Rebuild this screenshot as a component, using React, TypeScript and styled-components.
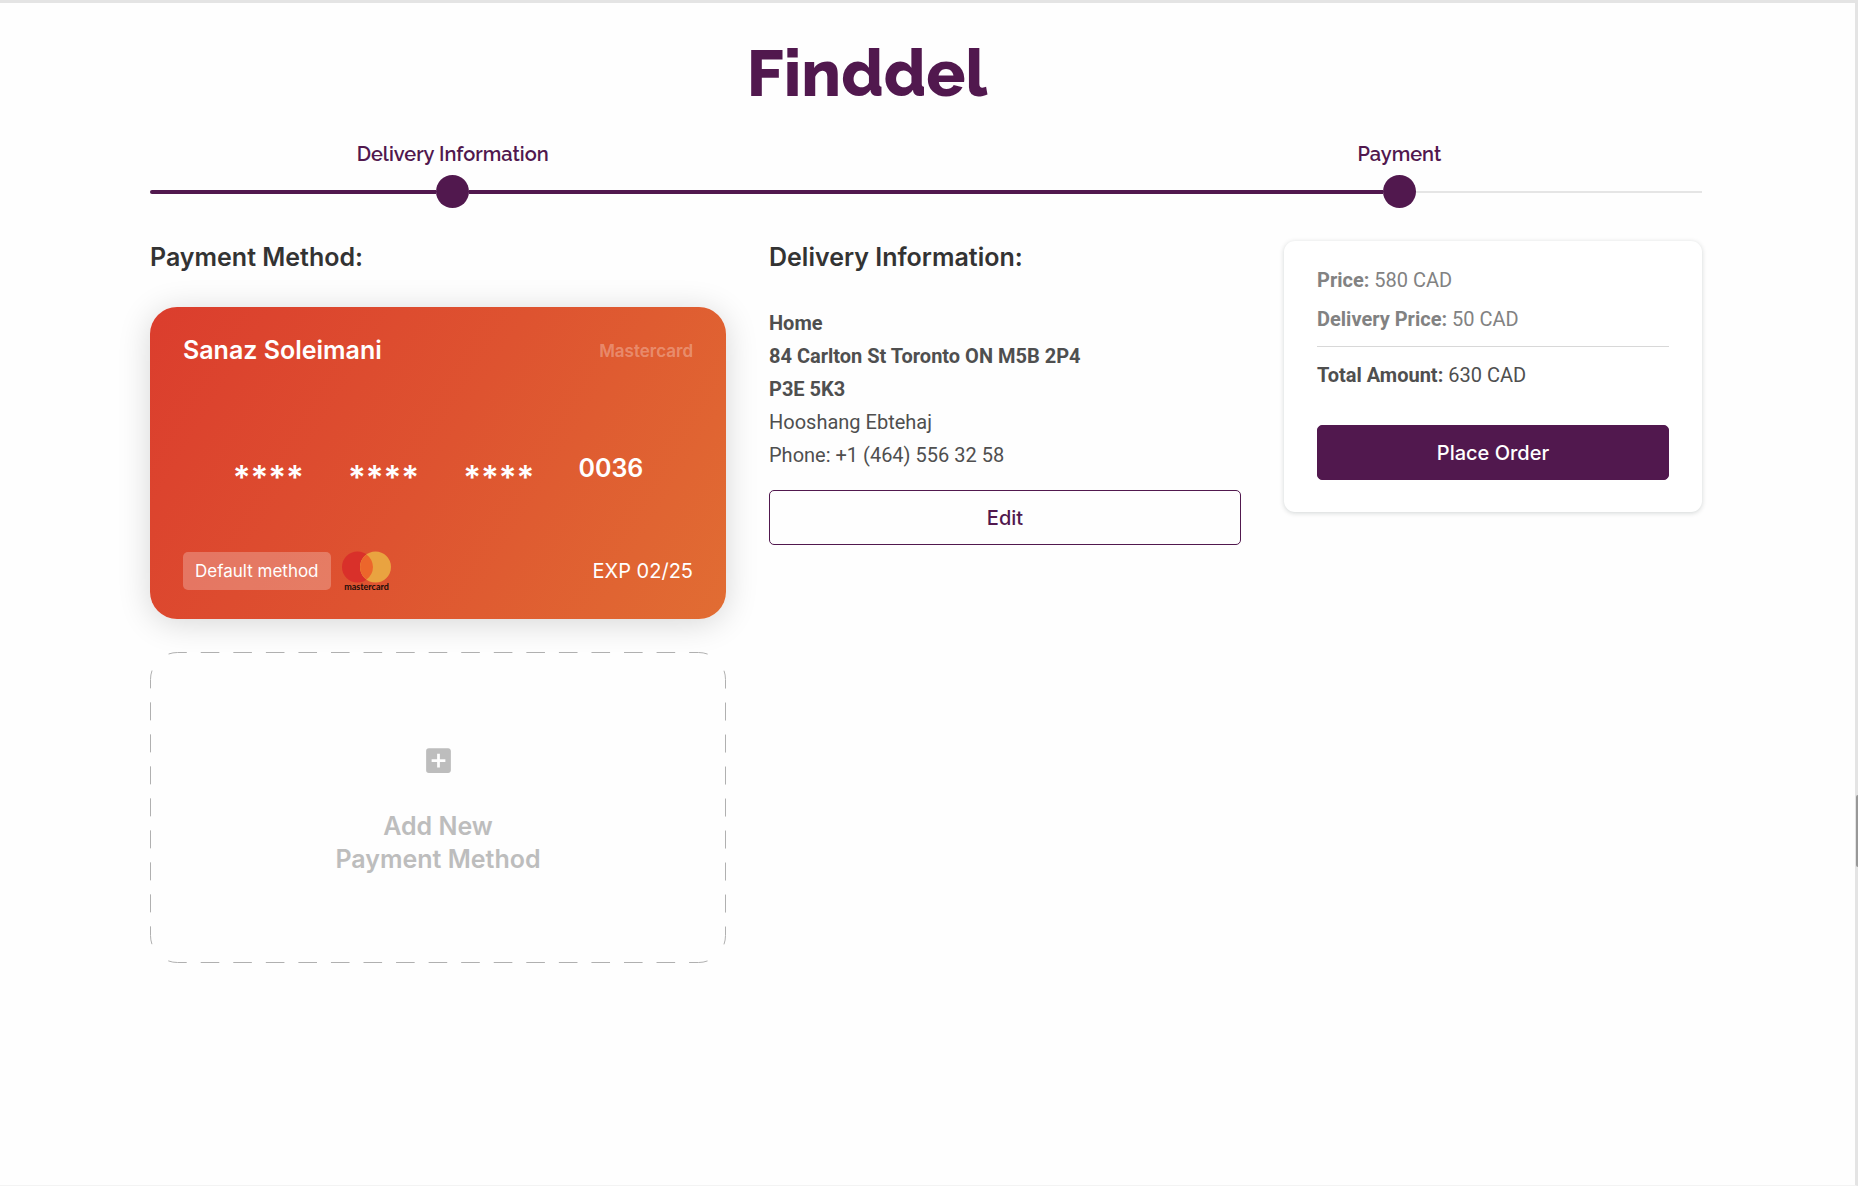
import React from "react";
import styled, { createGlobalStyle, css } from "styled-components";
import { MdAddBox } from "react-icons/md";

const plum = "#51184e";
const inter = 'Inter, "Liberation Sans", sans-serif';
const roboto = 'Roboto, "Liberation Sans", sans-serif';
const raleway = 'Raleway, Lato, "Liberation Sans", sans-serif';

const GlobalStyle = createGlobalStyle`
  *, *::before, *::after { box-sizing: border-box; }
  body { margin: 0; background: #fefefe; font-family: ${inter}; }
  h1, h2, p, ol, address { margin: 0; padding: 0; }
  button { font-family: inherit; cursor: pointer; }
`;

const Page = styled.div`
  position: relative;
  min-height: 100vh;
  padding: 42px 153px 0 150px;
  border-top: 3px solid #e4e4e4;
  border-right: 3px solid #e4e4e4;
  border-bottom: 1px solid #f3f3f3;
`;

const ScrollThumb = styled.span`
  position: absolute;
  top: 67%;
  right: -3px;
  width: 2px;
  height: 72px;
  border-radius: 2px 0 0 2px;
  background: #989898;
`;

const Header = styled.header`
  display: flex;
  justify-content: center;
  padding-right: 118px;
`;

const Logo = styled.h1`
  font-family: ${raleway};
  font-size: 65px;
  font-weight: 800;
  line-height: 56px;
  color: ${plum};
`;

const Steps = styled.ol`
  display: flex;
  align-items: flex-end;
  margin-top: 40px;
  list-style: none;
`;

const Step = styled.li`
  width: 39%;
`;

const StepLabel = styled.span`
  display: block;
  margin-bottom: 8px;
  font-family: ${raleway};
  font-size: 20px;
  font-weight: 600;
  line-height: 26px;
  text-align: center;
  color: ${plum};
`;

const Rail = styled.div`
  display: flex;
  align-items: center;
  height: 33px;
`;

const Connector = styled.li`
  display: flex;
  flex: 1;
  align-items: center;
  height: 33px;
`;

const Segment = styled.span<{ $done?: boolean; $start?: boolean }>`
  flex: 1;
  height: ${(p) => (p.$done ? 4 : 2)}px;
  border-radius: ${(p) => (p.$start ? "2px 0 0 2px" : "0")};
  background: ${(p) => (p.$done ? plum : "#e5e5e5")};
`;

const Dot = styled.span`
  width: 33px;
  height: 33px;
  border-radius: 50%;
  background: ${plum};
`;

const Columns = styled.main`
  display: grid;
  grid-template-columns: 576fr 472fr 418fr;
  gap: 43px;
  align-items: start;
  margin-top: 33px;
`;

const Heading = styled.h2`
  margin-bottom: 33px;
  font-size: 25px;
  font-weight: 600;
  line-height: 33px;
  color: #333;
`;

const CreditCard = styled.article`
  display: flex;
  flex-direction: column;
  justify-content: space-between;
  height: 312px;
  padding: 27px 33px 28px;
  border-radius: 27px;
  background: linear-gradient(121deg, #db3d2d 0%, #de5330 50%, #e16d33 100%);
  box-shadow: 0 4px 33px rgba(0, 0, 0, 0.16);
  color: #fff;
`;

const CardRow = styled.div`
  display: flex;
  align-items: center;
  justify-content: space-between;
`;

const Holder = styled.span`
  font-size: 25px;
  font-weight: 600;
  line-height: 33px;
`;

const Network = styled.span`
  font-size: 17px;
  font-weight: 600;
  line-height: 24px;
  color: rgba(255, 255, 255, 0.3);
`;

const CardNumber = styled.div`
  display: flex;
  align-items: center;
  justify-content: center;
  gap: 44px;
  padding-top: 18px;
  font-size: 25px;
  font-weight: 600;
  line-height: 33px;
`;

const Masked = styled.span`
  padding-top: 18px;
  font-size: 33px;
`;

const Badges = styled.div`
  display: flex;
  align-items: center;
  gap: 11px;
`;

const DefaultBadge = styled.span`
  padding: 0 12px;
  border-radius: 5px;
  background: rgba(255, 255, 255, 0.25);
  font-size: 17px;
  line-height: 38px;
`;

const Expiry = styled.span`
  font-size: 20px;
  line-height: 33px;
`;

const AddCard = styled.button`
  position: relative;
  display: flex;
  flex-direction: column;
  align-items: center;
  justify-content: center;
  gap: 33px;
  width: 100%;
  height: 311px;
  margin-top: 33px;
  padding: 4px 0 0;
  border: 0;
  border-radius: 27px;
  background: #fefefe;
  font-size: 25px;
  font-weight: 600;
  line-height: 33px;
  color: #bdbdbd;
`;

const DashedFrame = styled.svg`
  position: absolute;
  inset: 0;
  width: 100%;
  height: 100%;
`;

const Address = styled.address`
  margin-bottom: 18px;
  font-family: ${roboto};
  font-size: 20px;
  font-style: normal;
  line-height: 33px;
  color: #4f4f4f;
`;

const Strong = styled.strong`
  display: block;
  font-weight: 700;
`;

const Line = styled.span`
  display: block;
`;

const ActionButton = styled.button<{ $filled?: boolean }>`
  width: 100%;
  height: 55px;
  border: 1px solid ${plum};
  border-radius: 5px;
  font-size: 20px;
  font-weight: 500;
  ${(p) =>
    p.$filled
      ? css`
          background: ${plum};
          color: #fff;
        `
      : css`
          background: #fefefe;
          color: ${plum};
        `}
`;

const Summary = styled.aside`
  padding: 23px 33px 32px;
  border-radius: 11px;
  background: #fff;
  box-shadow: 0 1px 5px rgba(0, 30, 30, 0.18);
`;

const Amount = styled.p<{ $total?: boolean }>`
  font-family: ${roboto};
  font-size: 20px;
  line-height: 33px;
  color: ${(p) => (p.$total ? "#4f4f4f" : "#828282")};

  & + & {
    margin-top: 6px;
  }
`;

const Divider = styled.hr`
  height: 1px;
  margin: 10px 0 12px;
  border: 0;
  background: #d8d8d8;
`;

const PlaceOrder = styled.div`
  margin-top: 33px;
`;

/* Dashes sit centred on every point where a straight side meets its corner. */
function frameDashes() {
  const side = (count: number, dash: number, pitch: number) =>
    Array.from({ length: count - 1 }, () => [pitch - dash, dash]).flat();
  const corner = 24;
  const top = side(16, 18.6, 32.56);
  const edge = side(8, 18, 32);
  return [
    9.3, ...top, 14, 18.6,
    corner, 18, ...edge, 14, 18,
    corner, 18.6, ...top, 14, 18.6,
    corner, 18, ...edge, 14, 18,
    corner, 9.3,
  ].join(" ");
}

function MastercardMark() {
  return (
    <svg width="49" height="40" viewBox="0 0 49 40" role="img" aria-label="mastercard">
      <circle cx="15.5" cy="16" r="15.5" fill="#d9302a" />
      <circle cx="33.5" cy="16" r="15.5" fill="#e9a340" />
      <path d="M24.5 3.4a15.5 15.5 0 0 1 0 25.2a15.5 15.5 0 0 1 0-25.2z" fill="#ec662b" />
      <text x="24.5" y="39" textAnchor="middle" fontFamily="Lato, sans-serif" fontSize="9" fontWeight="700" fill="#1a0d0a">
        mastercard
      </text>
    </svg>
  );
}

export default function App() {
  return (
    <>
      <GlobalStyle />
      <Page>
        <ScrollThumb />
        <Header>
          <Logo>Finddel</Logo>
        </Header>

        <Steps>
          <Step>
            <StepLabel>Delivery Information</StepLabel>
            <Rail>
              <Segment $done $start />
              <Dot />
              <Segment $done />
            </Rail>
          </Step>
          <Connector aria-hidden="true">
            <Segment $done />
          </Connector>
          <Step aria-current="step">
            <StepLabel>Payment</StepLabel>
            <Rail>
              <Segment $done />
              <Dot />
              <Segment />
            </Rail>
          </Step>
        </Steps>

        <Columns>
          <section>
            <Heading>Payment Method:</Heading>
            <CreditCard>
              <CardRow>
                <Holder>Sanaz Soleimani</Holder>
                <Network>Mastercard</Network>
              </CardRow>
              <CardNumber>
                <Masked>****</Masked>
                <Masked>****</Masked>
                <Masked>****</Masked>
                <span>0036</span>
              </CardNumber>
              <CardRow>
                <Badges>
                  <DefaultBadge>Default method</DefaultBadge>
                  <MastercardMark />
                </Badges>
                <Expiry>EXP 02/25</Expiry>
              </CardRow>
            </CreditCard>
            <AddCard type="button">
              <DashedFrame viewBox="0 0 576 311" preserveAspectRatio="none" aria-hidden="true">
                <rect x="0.5" y="0.5" width="575" height="310" rx="27" fill="none" stroke="#b0b0b0" strokeDasharray={frameDashes()} />
              </DashedFrame>
              <MdAddBox size={33} />
              <span>
                Add New
                <br />
                Payment Method
              </span>
            </AddCard>
          </section>

          <section>
            <Heading>Delivery Information:</Heading>
            <Address>
              <Strong>Home</Strong>
              <Strong>84 Carlton St Toronto ON M5B 2P4</Strong>
              <Strong>P3E 5K3</Strong>
              <Line>Hooshang Ebtehaj</Line>
              <Line>Phone: +1 (464) 556 32 58</Line>
            </Address>
            <ActionButton type="button">Edit</ActionButton>
          </section>

          <Summary>
            <Amount>
              <b>Price:</b> 580 CAD
            </Amount>
            <Amount>
              <b>Delivery Price:</b> 50 CAD
            </Amount>
            <Divider />
            <Amount $total>
              <b>Total Amount:</b> 630 CAD
            </Amount>
            <PlaceOrder>
              <ActionButton type="button" $filled>
                Place Order
              </ActionButton>
            </PlaceOrder>
          </Summary>
        </Columns>
      </Page>
    </>
  );
}
